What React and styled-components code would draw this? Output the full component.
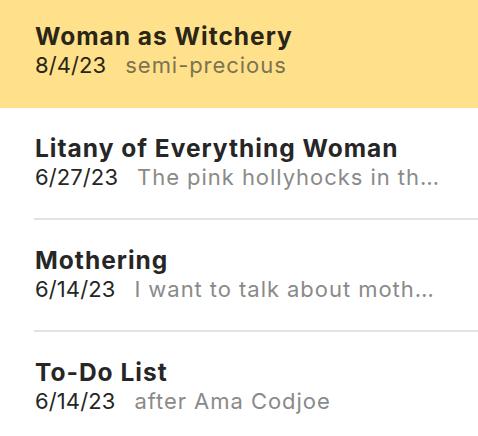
import React from "react";
import styled, { createGlobalStyle } from "styled-components";

const GlobalStyle = createGlobalStyle`
  html, body {
    margin: 0;
    padding: 0;
    background: #ffffff;
    overflow: hidden;
  }
  body {
    font-family: "Inter", "Noto Sans", "Liberation Sans", sans-serif;
    -webkit-font-smoothing: antialiased;
  }
`;

const notes = [
  { title: "Woman as Witchery", date: "8/4/23", preview: "semi-precious", selected: true },
  { title: "Litany of Everything Woman", date: "6/27/23", preview: "The pink hollyhocks in th…" },
  { title: "Mothering", date: "6/14/23", preview: "I want to talk about moth…" },
  { title: "To-Do List", date: "6/14/23", preview: "after Ama Codjoe" },
];

const NoteItem = ({ title, date, preview, selected, last }) => (
  <Row $selected={selected}>
    <Title $selected={selected}>{title}</Title>
    <Meta>
      <DateText $selected={selected}>{date}</DateText>
      <Preview $selected={selected}>{preview}</Preview>
    </Meta>
    {!last && !selected && <Divider />}
  </Row>
);

const App = () => {
  return (
    <>
      <GlobalStyle />
      <List>
        {notes.map((n, i) => (
          <NoteItem key={n.title} {...n} last={i === notes.length - 1} />
        ))}
      </List>
    </>
  );
};

export default App;

const List = styled.div`
  width: 478px;
  margin-top: -4px;
  display: flex;
  flex-direction: column;
`;

const Row = styled.div`
  position: relative;
  flex-shrink: 0;
  height: 112px;
  box-sizing: border-box;
  padding: 26px 20px 0 35px;
  background: ${(p) => (p.$selected ? "#ffe18b" : "transparent")};
  display: flex;
  flex-direction: column;
`;

const Title = styled.div`
  font-size: 24.5px;
  font-weight: 700;
  line-height: 29px;
  letter-spacing: 1px;
  color: ${(p) => (p.$selected ? "#2a2516" : "#262626")};
  white-space: nowrap;
  overflow: hidden;
  text-overflow: ellipsis;
`;

const Meta = styled.div`
  display: flex;
  gap: 19px;
  font-size: 22px;
  line-height: 29px;
  white-space: nowrap;
  overflow: hidden;
`;

const DateText = styled.span`
  color: ${(p) => (p.$selected ? "#2a2516" : "#262626")};
  letter-spacing: 0.1px;
  flex-shrink: 0;
`;

const Preview = styled.span`
  color: ${(p) => (p.$selected ? "#7d7350" : "#8a8a8a")};
  letter-spacing: 0.95px;
  overflow: hidden;
  text-overflow: ellipsis;
`;

const Divider = styled.div`
  position: absolute;
  left: 34px;
  right: 0;
  bottom: 0;
  height: 2px;
  background: #e3e3e3;
`;
